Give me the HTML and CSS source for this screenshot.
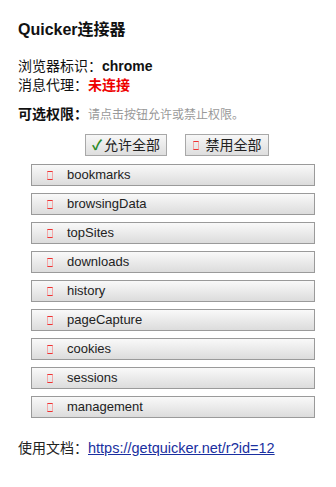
FILE: index.html
```html
<!DOCTYPE html>
<html>
<head>
<meta charset="utf-8">
<link rel="stylesheet" href="styles.css">
</head>
<body>
<div class="page">
  <h1 class="title">Quicker连接器</h1>
  <div class="info">
    <div>浏览器标识<span class="colon">：</span><b>chrome</b></div>
    <div>消息代理<span class="colon">：</span><span class="red">未连接</span></div>
  </div>
  <div class="perm"><b>可选权限<span class="colon">：</span></b><span class="hint">请点击按钮允许或禁止权限。</span></div>
  <div class="actions">
    <button class="btn"><span class="check">✓</span>允许全部</button>
    <button class="btn"><span class="box"></span>禁用全部</button>
  </div>
  <div class="list">
    <div class="item"><span class="box"></span>bookmarks</div>
    <div class="item"><span class="box"></span>browsingData</div>
    <div class="item"><span class="box"></span>topSites</div>
    <div class="item"><span class="box"></span>downloads</div>
    <div class="item"><span class="box"></span>history</div>
    <div class="item"><span class="box"></span>pageCapture</div>
    <div class="item"><span class="box"></span>cookies</div>
    <div class="item"><span class="box"></span>sessions</div>
    <div class="item"><span class="box"></span>management</div>
  </div>
  <div class="doc">使用文档<span class="colon">：</span><a href="#">https://getquicker.net/r?id=12</a></div>
</div>
</body>
</html>
```
FILE: styles.css
```css
html, body { margin: 0; padding: 0; background: #fff; }
body {
  font-family: "Liberation Sans", "Noto Sans CJK SC", sans-serif;
  color: #111;
  font-size: 14px;
}
.page { padding: 19px 21px 0 18px; }
.title { font-size: 16px; font-weight: bold; margin: 0; height: 22px; line-height: 22px; }
.colon { display: inline-block; width: 1em; text-align: left; }
.info { margin-top: 16px; line-height: 19px; }
.info > div { height: 19px; }
.info b { font-weight: bold; }
.red { color: #e00; font-weight: bold; }
.perm { margin-top: 10px; height: 19px; line-height: 19px; white-space: nowrap; }
.hint { color: #999; font-size: 12px; }
.actions {
  display: flex; justify-content: center; gap: 18px;
  margin-top: 10px; padding-left: 21px;
}
.btn {
  box-sizing: border-box;
  font-family: inherit; font-size: 14px; color: #222;
  height: 22px; padding: 0;
  border: 1px solid #a8a8a8;
  background: linear-gradient(#f7f7f7, #dedede);
  display: flex; align-items: center; justify-content: center;
  white-space: nowrap; line-height: 20px;
  border-radius: 0;
}
.btn:first-child { width: 82px; }
.btn:last-child { width: 84px; }
.check { color: #2a8a2a; margin-right: 2px; font-weight: bold; }
.btn .box { margin-right: 7px; }
.box {
  flex: none;
  display: inline-block; box-sizing: border-box; width: 6px; height: 9px;
  border-top: 1px solid #e33; border-bottom: 1px solid #e33;
  border-left: 1px solid #f4a8a8; border-right: 1px solid #f4a8a8;
}
.list { margin: 8px 0 0 13px; display: flex; flex-direction: column; gap: 7px; }
.item {
  box-sizing: border-box;
  height: 22px; line-height: 20px; font-size: 13px; color: #222;
  border: 1px solid #9a9a9a;
  background: linear-gradient(#f9f9f9, #dcdcdc);
  display: flex; align-items: center; padding-left: 15px;
}
.item .box { margin-right: 14px; }
.doc { margin-top: 21px; height: 19px; line-height: 19px; color: #222; white-space: nowrap; }
.doc a { color: #1a2fa0; text-decoration: underline; font-size: 14.5px; }
```
